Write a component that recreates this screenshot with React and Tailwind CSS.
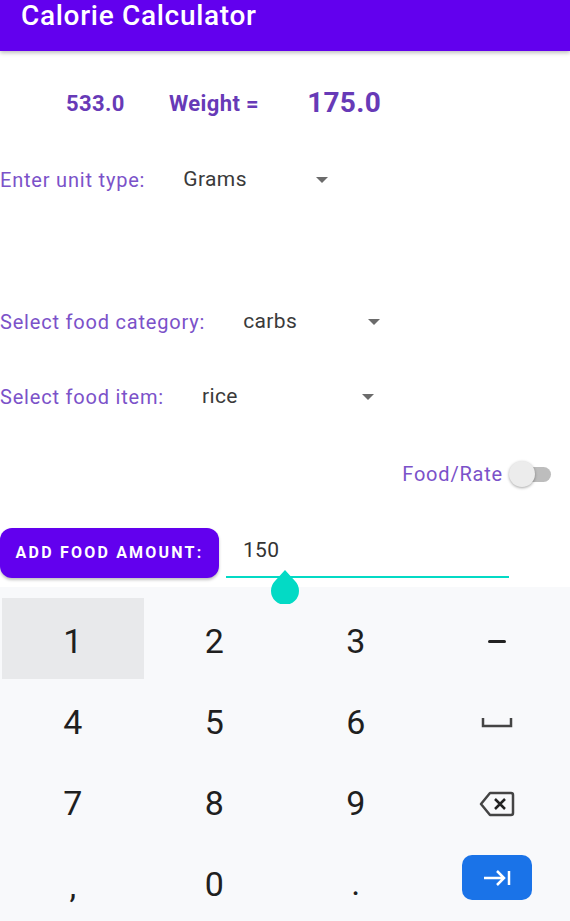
import React from "react";

const Caret = () => (
  <svg width="12" height="6" viewBox="0 0 12 6" className="block">
    <path d="M0 0 L12 0 L6 6 Z" fill="#6b6b6b" />
  </svg>
);

const Spinner = ({ value, width }) => (
  <div className="flex items-center ml-[38px]" style={{ width }}>
    <span className="text-[21px] tracking-[0.4px] text-[#3a3a3a]">{value}</span>
    <span className="ml-auto">
      <Caret />
    </span>
  </div>
);

const Key = ({ children, active }) => (
  <div
    className={
      "h-[81px] flex items-center justify-center pt-[6px] text-[34px] text-[#1f1f1f] " +
      (active ? "bg-[#e8e9eb]" : "")
    }
  >
    {children}
  </div>
);

export default function App() {
  return (
    <div className="w-[570px] h-[921px] bg-white flex flex-col overflow-hidden font-['Roboto',sans-serif]">
      <div className="h-[51px] shrink-0 bg-[#6200ee] shadow-[0_2px_4px_rgba(0,0,0,0.25)] relative z-10">
        <h1 className="pl-[21px] text-[28px] leading-[32px] tracking-[0.7px] font-medium text-white">
          Calorie Calculator
        </h1>
      </div>

      <div className="flex items-center h-[30px] mt-[37px] text-[#673ab7]">
        <span className="ml-[66px] text-[22px] tracking-[0.4px] font-bold">533.0</span>
        <span className="ml-[44px] text-[22px] tracking-[0.4px] font-bold">Weight =</span>
        <span className="ml-[48px] text-[28px] tracking-[0.3px] font-bold">175.0</span>
      </div>

      <div className="flex items-center h-[30px] mt-[47px]">
        <span className="text-[20px] tracking-[0.8px] text-[#7b52c9]">Enter unit type:</span>
        <Spinner value="Grams" width="145px" />
      </div>

      <div className="flex items-center h-[30px] mt-[112px]">
        <span className="text-[20px] tracking-[0.8px] text-[#7b52c9]">Select food category:</span>
        <Spinner value="carbs" width="137px" />
      </div>

      <div className="flex items-center h-[30px] mt-[45px]">
        <span className="text-[20px] tracking-[0.8px] text-[#7b52c9]">Select food item:</span>
        <Spinner value="rice" width="172px" />
      </div>

      <div className="flex items-center justify-end h-[30px] mt-[47px] pr-[17px]">
        <span className="text-[20px] tracking-[0.8px] text-[#7b52c9]">Food/Rate</span>
        <div className="relative ml-[6px] w-[44px] h-[26px] flex items-center">
          <div className="w-[36px] h-[15px] ml-[6px] rounded-full bg-[#bdbdbd]" />
          <div className="absolute left-0 top-0 w-[26px] h-[26px] rounded-full bg-[#ececec] shadow-[0_1px_3px_rgba(0,0,0,0.35)]" />
        </div>
      </div>

      <div className="flex items-start mt-[39px] relative z-10">
        <button className="w-[219px] h-[50px] rounded-[12px] bg-[#6200ee] text-white text-[16px] font-bold tracking-[2.2px] shadow-[0_2px_3px_rgba(0,0,0,0.25)]">
          ADD FOOD AMOUNT:
        </button>
        <div className="ml-[7px] w-[283px] h-[50px] relative">
          <div className="pl-[17px] pt-[9px] text-[21px] leading-[26px] tracking-[0.3px] text-[#333]">150</div>
          <div className="absolute left-0 right-0 top-[48px] h-[2px] bg-[#03dac5]" />
          <svg
            width="30"
            height="34"
            viewBox="0 0 30 34"
            className="absolute left-[44px] top-[42px]"
          >
            <path d="M15 0 L25 11 A14 14 0 1 1 5 11 Z" fill="#03dac5" />
          </svg>
        </div>
      </div>

      <div className="mt-[9px] flex-1 bg-[#f8f9fb] pt-[11px] px-[2px]">
        <div className="grid grid-cols-4">
          <Key active>1</Key>
          <Key>2</Key>
          <Key>3</Key>
          <Key>
            <div className="w-[18px] h-[3px] bg-[#222] rounded-sm" />
          </Key>
          <Key>4</Key>
          <Key>5</Key>
          <Key>6</Key>
          <Key>
            <svg width="32" height="10" viewBox="0 0 32 10">
              <path d="M2 0 V8 H30 V0" fill="none" stroke="#444" strokeWidth="2.5" />
            </svg>
          </Key>
          <Key>7</Key>
          <Key>8</Key>
          <Key>9</Key>
          <Key>
            <svg width="36" height="26" viewBox="0 0 36 26">
              <path
                d="M11 2 H32 a2 2 0 0 1 2 2 V22 a2 2 0 0 1 -2 2 H11 L2 13 Z"
                fill="none"
                stroke="#444"
                strokeWidth="2.5"
                strokeLinejoin="round"
              />
              <path d="M16 8 L26 18 M26 8 L16 18" stroke="#222" strokeWidth="2.5" />
            </svg>
          </Key>
          <Key>
            <span className="mt-[4px]">,</span>
          </Key>
          <Key>0</Key>
          <Key>
            <span className="-mt-[2px]">.</span>
          </Key>
          <Key>
            <div className="w-[70px] h-[45px] -mt-[14px] rounded-[10px] bg-[#1a73e8] flex items-center justify-center">
              <svg width="30" height="18" viewBox="0 0 30 18">
                <path d="M2 9 H22 M15 2 L22 9 L15 16" fill="none" stroke="#fff" strokeWidth="2.5" />
                <path d="M27 2 V16" stroke="#fff" strokeWidth="2.5" />
              </svg>
            </div>
          </Key>
        </div>
      </div>
    </div>
  );
}
